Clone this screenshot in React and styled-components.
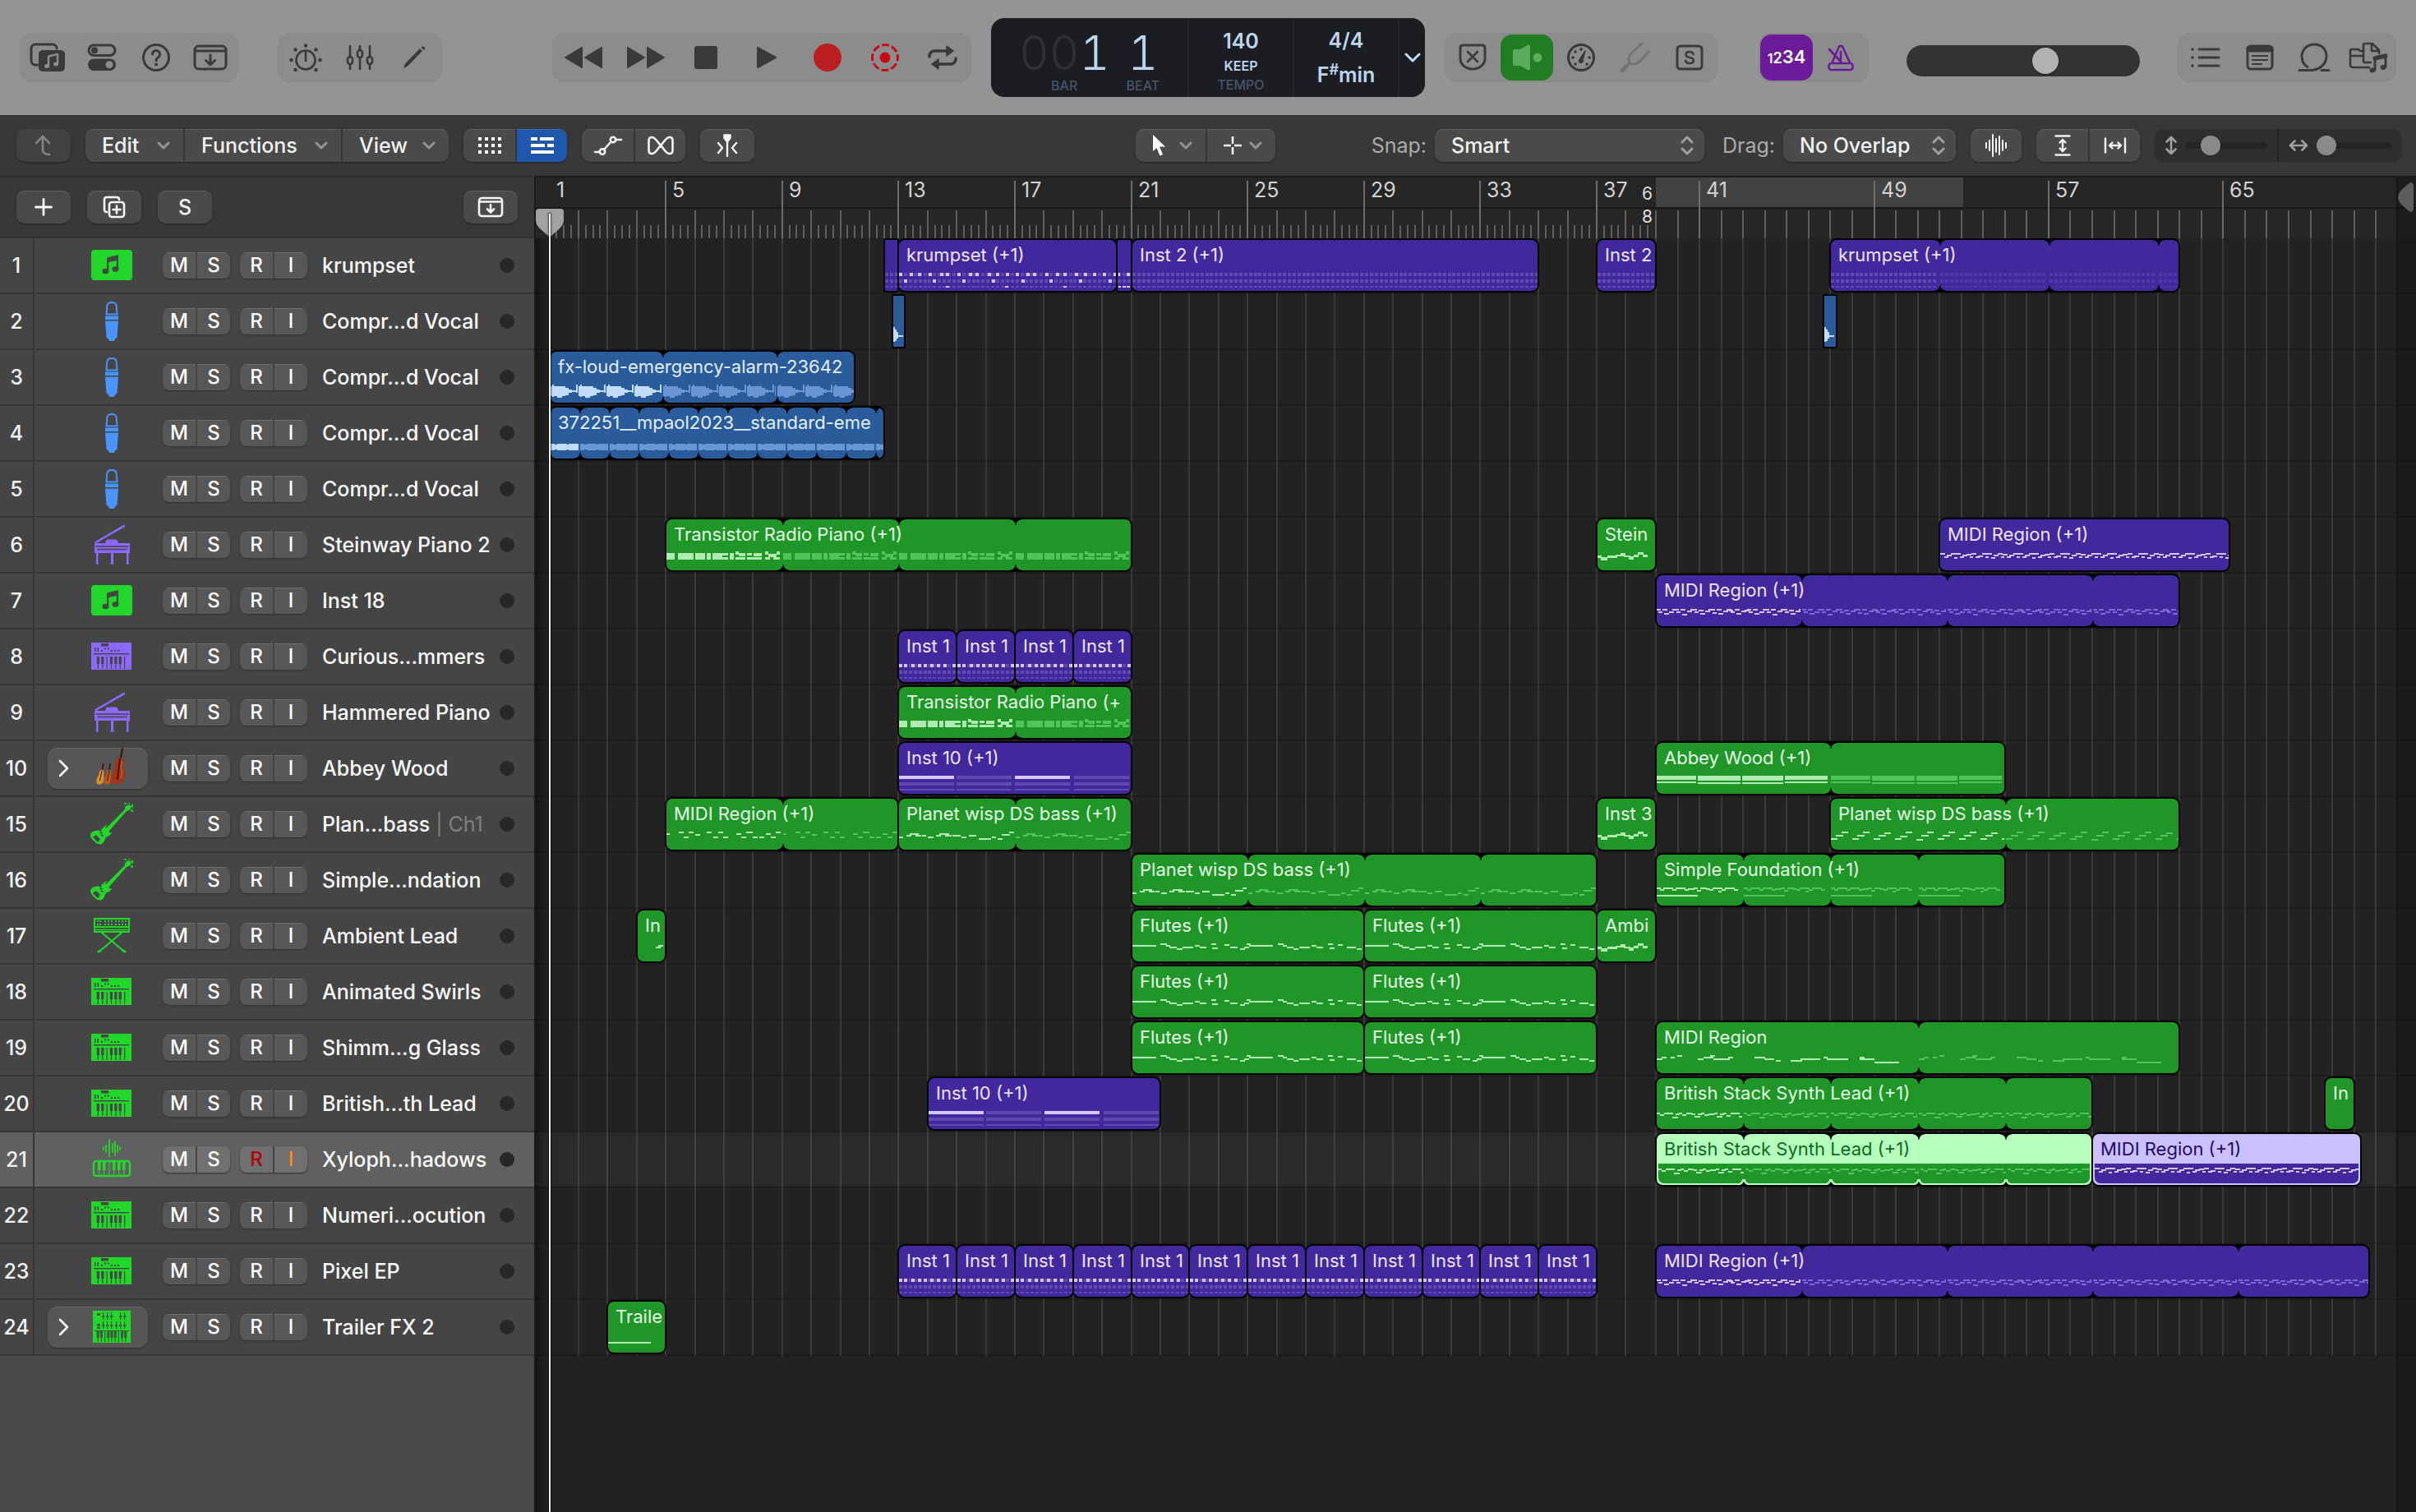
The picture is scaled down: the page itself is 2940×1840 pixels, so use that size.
import React from "react";
import styled, { createGlobalStyle, css } from "styled-components";

/* ------------------------------------------------------------------ */
/* Base                                                                */
/* ------------------------------------------------------------------ */

const GlobalStyle = createGlobalStyle`
  *, *::before, *::after { box-sizing: border-box; }
  html, body, #root { height: 100%; }
  body {
    margin: 0;
    background: #222222;
    color: #f2f2f2;
    font-family: Inter, "Liberation Sans", sans-serif;
    font-size: 25px;
    overflow: hidden;
  }
  button, select, input { font: inherit; color: inherit; margin: 0; }
`;

const App_ = styled.div`
  display: flex;
  flex-direction: column;
  height: 100vh;
`;

/* ------------------------------------------------------------------ */
/* Control bar                                                         */
/* ------------------------------------------------------------------ */

const ControlBar = styled.header`
  display: flex;
  align-items: center;
  flex: none;
  height: 140px;
  padding: 0 24px;
  background: #949494;
`;

const Cluster = styled.div`
  display: flex;
  align-items: center;
  gap: ${(p) => p.$gap}px;
  margin-left: ${(p) => p.$before || "0"};
`;

const Group = styled.div`
  display: flex;
  align-items: center;
  gap: ${(p) => (p.$tight ? 0 : 2)}px;
  padding: ${(p) => (p.$tight ? "0" : "2px")};
  height: 60px;
  border-radius: 16px;
  background: #8c8c8c;
  box-shadow: inset 0 0 0 1px #898989;
`;

const BarButton = styled.button`
  display: flex;
  align-items: center;
  justify-content: center;
  width: ${(p) => p.$w || 64}px;
  height: 56px;
  padding: 0;
  border: 0;
  border-radius: 14px;
  background: ${(p) => p.$bg || "transparent"};
  color: ${(p) => p.$color || "#3a3a3a"};
`;

const CountIn = styled.span`
  display: flex;
  align-items: baseline;
  color: #ffffff;
  font-weight: 600;
  font-size: 18px;
  line-height: 28px;
  b { font-weight: 600; font-size: 22px; }
  small { font-size: 16px; }
`;

const Lcd = styled.section`
  display: flex;
  height: 96px;
  border-radius: 16px;
  background: #1c1d22;
  color: #bdd6ee;
`;

const LcdPosition = styled.div`
  display: grid;
  grid-template-columns: auto auto;
  grid-template-rows: 60px 18px;
  column-gap: 20px;
  justify-content: center;
  align-content: center;
  width: 239px;
  padding-top: 8px;
`;

const BigDigits = styled.div`
  font-size: 57px;
  font-weight: 300;
  font-variant-numeric: tabular-nums;
  line-height: 60px;
  text-align: center;
  span { color: #2e2f38; }
`;

const LcdCaption = styled.div`
  color: #46546a;
  font-size: 16px;
  font-weight: 500;
  line-height: 18px;
  text-align: center;
`;

const LcdCell = styled.div`
  display: flex;
  flex-direction: column;
  align-items: center;
  justify-content: center;
  gap: ${(p) => (p.$pair ? 10 : 2)}px;
  width: 128px;
  padding: ${(p) => (p.$pair ? "0" : "8px 0 2px")};
  border-left: 2px solid #25262c;
`;

const LcdValue = styled.div`
  font-size: ${(p) => (p.$small ? 16 : 25)}px;
  font-weight: 600;
  line-height: ${(p) => (p.$small ? 24 : 32)}px;
  sup { font-size: 18px; line-height: 0; }
`;

const LcdMenu = styled.button`
  display: flex;
  align-items: center;
  justify-content: center;
  width: 33px;
  padding: 0;
  border: 0;
  border-left: 2px solid #25262c;
  background: transparent;
`;

const range = css`
  appearance: none;
  display: block;
  background: transparent;
`;

const MasterVolume = styled.input`
  ${range}
  width: 284px;
  height: 38px;
  border-radius: 19px;
  background: #333333;
  padding: 0 3px;
  &::-webkit-slider-thumb {
    appearance: none;
    width: 32px;
    height: 32px;
    border-radius: 50%;
    background: #b1b1b1;
    box-shadow: 0 1px 2px #1c1c1c;
  }
`;

const VolumeSlot = styled.div`
  padding-top: 8px;
`;

/* ------------------------------------------------------------------ */
/* Tracks-area menu bar                                                */
/* ------------------------------------------------------------------ */

const MenuBar = styled.nav`
  display: flex;
  align-items: center;
  flex: none;
  gap: 18px;
  height: 74px;
  padding: 0 18px 0 20px;
  background: #383838;
`;

const raised = css`
  background: #4a4a4a;
  box-shadow: inset 0 1px 0 #5e5e5e, 0 1px 2px #242424;
`;

const Segmented = styled.div`
  display: flex;
  height: 40px;
  border-radius: 10px;
  overflow: hidden;
  margin-left: ${(p) => p.$before || "0"};
  ${raised}
`;

const SegButton = styled.button`
  display: flex;
  align-items: center;
  justify-content: ${(p) => (p.$menu ? "space-between" : "center")};
  width: ${(p) => p.$w || 63}px;
  padding: ${(p) => (p.$menu ? "0 16px 0 20px" : "0")};
  border: 0;
  background: ${(p) => (p.$on ? "#1f57ad" : "transparent")};
  box-shadow: inset 0 1px 0 ${(p) => (p.$on ? "#3a6fbf" : "#5e5e5e")};
  font-weight: 500;
  white-space: nowrap;
  & + & { border-left: 2px solid ${(p) => (p.$on ? "#1f57ad" : "#363636")}; }
`;

const ToolButton = styled.button`
  display: flex;
  align-items: center;
  justify-content: center;
  width: ${(p) => p.$w || 66}px;
  height: 40px;
  padding: 0;
  border: 0;
  border-radius: 10px;
  font-weight: 500;
  background: ${(p) => (p.$off ? "#414141" : "#4a4a4a")};
  color: ${(p) => (p.$off ? "#858585" : "#f5f5f5")};
  box-shadow: inset 0 1px 0 ${(p) => (p.$off ? "#444444" : "#606060")}, 0 1px 2px #242424;
  margin-left: ${(p) => p.$before || "0"};
`;

const Field = styled.div`
  display: flex;
  align-items: center;
  gap: 10px;
  margin-left: ${(p) => p.$before || "0"};
  label { color: #ababab; min-width: 68px; text-align: right; }
`;

const SelectBox = styled.div`
  position: relative;
  width: ${(p) => p.$w}px;
  select {
    appearance: none;
    width: 100%;
    height: 40px;
    padding: 0 40px 0 20px;
    border: 0;
    border-radius: 10px;
    font-weight: 500;
    ${raised}
  }
  svg { position: absolute; right: 12px; top: 8px; pointer-events: none; }
`;

const ZoomPanel = styled.div`
  display: flex;
  height: 40px;
  width: 300px;
  border-radius: 10px;
  background: #2e2e2e;
  color: #a0a0a0;
`;

const ZoomCell = styled.div`
  display: flex;
  flex: 1;
  align-items: center;
  gap: 10px;
  min-width: 0;
  padding: 0 12px;
  & + & { border-left: 2px solid #222222; }
  svg { flex: none; }
`;

const ZoomRange = styled.input`
  ${range}
  flex: 1;
  width: 0;
  min-width: 0;
  height: 24px;
  &::-webkit-slider-runnable-track {
    height: 8px;
    border-radius: 4px;
    background: #242424;
  }
  &::-webkit-slider-thumb {
    appearance: none;
    width: 24px;
    height: 24px;
    margin-top: -8px;
    border-radius: 50%;
    background: #8a8a8a;
  }
`;

/* ------------------------------------------------------------------ */
/* Track headers                                                       */
/* ------------------------------------------------------------------ */

const Workspace = styled.main`
  display: grid;
  grid-template-columns: 652px minmax(0, 1fr);
  flex: 1;
  min-height: 0;
`;

const HeaderPanel = styled.section`
  display: flex;
  flex-direction: column;
  background: #484848;
  border-right: 2px solid #1a1a1a;
`;

const HeaderTools = styled.div`
  display: flex;
  align-items: center;
  gap: 20px;
  flex: none;
  height: 76px;
  padding: 0 20px;
  background: #383838;
  border-top: 2px solid #2f2f2f;
  border-bottom: 2px solid #323232;
`;

const TrackList = styled.ol`
  margin: 0;
  padding: 0;
  list-style: none;
`;

const TrackRow = styled.li`
  display: flex;
  align-items: stretch;
  height: 68px;
  border-bottom: 2px solid #363636;
  background: ${(p) => (p.$selected ? "#606060" : "#454545")};
`;

const TrackNumber = styled.div`
  display: flex;
  align-items: center;
  justify-content: center;
  width: 42px;
  border-right: 2px solid #363636;
  font-weight: 500;
`;

const TrackBody = styled.div`
  display: flex;
  flex: 1;
  align-items: center;
  min-width: 0;
  padding: 0 24px 0 16px;
`;

const IconSlot = styled.div`
  display: flex;
  align-items: center;
  width: 122px;
  height: 50px;
  padding-left: 52px;
  margin-right: 18px;
`;

const StackSlot = styled.button`
  display: flex;
  align-items: center;
  gap: 26px;
  width: 122px;
  height: 50px;
  padding: 0 0 0 12px;
  margin-right: 18px;
  border: 0;
  border-radius: 12px;
  background: #565656;
  box-shadow: inset 0 1px 0 #6a6a6a, 0 1px 2px #303030;
`;

const Pair = styled.div`
  display: flex;
  width: 82px;
  height: 32px;
  margin-right: ${(p) => p.$after}px;
  border-radius: 8px;
  overflow: hidden;
  background: ${(p) => (p.$lit ? "#707070" : "#575757")};
  box-shadow: 0 1px 2px #303030;
`;

const PairButton = styled.button`
  flex: 1;
  padding: 0;
  border: 0;
  background: transparent;
  box-shadow: inset 0 1px 0 #6e6e6e;
  color: ${(p) => p.$color || "#ffffff"};
  font-size: 24px;
  font-weight: 500;
  line-height: 32px;
  & + & { border-left: 2px solid #444444; }
`;

const TrackName = styled.div`
  flex: 1;
  min-width: 0;
  color: #fafafa;
  font-weight: 500;
  white-space: nowrap;
  span { color: #808080; font-weight: 400; }
`;

const TrackDot = styled.span`
  width: 18px;
  height: 18px;
  border-radius: 50%;
  background: #272727;
`;

/* ------------------------------------------------------------------ */
/* Timeline                                                            */
/* ------------------------------------------------------------------ */

const Timeline = styled.section`
  position: relative;
  display: flex;
  flex-direction: column;
  overflow: hidden;
  background: #222222;
`;

const Ruler = styled.div`
  position: relative;
  flex: none;
  height: 76px;
  background: #262626;
  border-top: 2px solid #1b1b1b;
  svg { display: block; }
`;

const Cycle = styled.div`
  position: absolute;
  top: 0;
  height: 36px;
  background: #424242;
`;

const RulerSplit = styled.div`
  position: absolute;
  top: 36px;
  left: 0;
  right: 0;
  height: 2px;
  background: #181818;
`;

const RulerLabel = styled.span`
  position: absolute;
  top: 0;
  padding-left: 8px;
  color: #d2d2d2;
  line-height: 30px;
`;

const MeterMark = styled.span`
  position: absolute;
  top: 6px;
  color: #dedede;
  font-size: 21px;
  line-height: 28px;
  text-align: right;
  transform: translateX(-100%);
  padding-right: 4px;
`;

const RulerTicks = styled.svg`
  position: absolute;
  inset: 0;
  width: 100%;
  height: 100%;
`;

const Lanes = styled.div`
  position: relative;
  flex: none;
`;

const GridLines = styled.svg`
  position: absolute;
  inset: 0;
  width: 100%;
  height: 100%;
`;

const Lane = styled.div`
  height: 68px;
  border-bottom: 2px solid #1c1c1c;
  background: ${(p) => (p.$selected ? "#2a2a2a" : "transparent")};
`;

const RegionLayer = styled.div`
  position: absolute;
  inset: 0;
`;

const RegionRow = styled.div`
  position: relative;
  height: 68px;
`;

const Beyond = styled.div`
  position: absolute;
  top: 2px;
  bottom: 0;
  right: 0;
  background: rgba(0, 0, 0, 0.22);
  border-left: 2px solid #151515;
`;

const EndMarker = styled.svg`
  position: absolute;
  top: 4px;
  left: 0;
`;

const EdgeShade = styled.div`
  position: absolute;
  top: 76px;
  bottom: 0;
  left: 0;
  width: 14px;
  background: linear-gradient(90deg, rgba(0, 0, 0, 0.4), rgba(0, 0, 0, 0));
`;

const Playhead = styled.div`
  position: absolute;
  top: 40px;
  bottom: 0;
  width: 34px;
  transform: translateX(-50%);
  svg { display: block; }
  &::after {
    content: "";
    position: absolute;
    top: 6px;
    bottom: 0;
    left: 16px;
    width: 2px;
    background: #f4f4f4;
    box-shadow: 0 0 2px 1px rgba(0, 0, 0, 0.6);
  }
`;

const PALETTE = {
  green: { bg: "#1f9627", text: "#e3fbe4", lite: "#aeecb2", dim: "#50c55a", base: "#50c55a", faint: "#36ab40", sel: "#b4ffbc", selText: "#0d6a1c" },
  purple: { bg: "#41289c", text: "#ebe5ff", lite: "#d2c6fb", dim: "#8267da", base: "#6149b0", faint: "#4f37a7", sel: "#ccc0ff", selText: "#1f0c66" },
  blue: { bg: "#2a5b9b", text: "#e2efff", lite: "#c3dcfb", dim: "#6a97d4", base: "#6a97d4", faint: "#6a97d4", sel: "#c3dcfb", selText: "#12345f" },
};

const Region = styled.article`
  position: absolute;
  top: 0;
  height: 66px;
  display: flex;
  flex-direction: column;
  overflow: hidden;
  border: 2px solid #000000;
  border-radius: ${(p) => (p.$square ? 3 : 9)}px;
  background: ${(p) => (p.$sel ? PALETTE[p.$c].sel : PALETTE[p.$c].bg)};
  color: ${(p) => (p.$sel ? PALETTE[p.$c].selText : PALETTE[p.$c].text)};
`;

const RegionName = styled.div`
  flex: none;
  height: 36px;
  padding-left: 9px;
  font-size: 22px;
  font-weight: 400;
  line-height: 36px;
  white-space: nowrap;
`;

const RegionNotes = styled.div`
  flex: 1;
  min-height: 0;
  overflow: hidden;
  ${(p) =>
    p.$sel &&
    css`
      margin: 0 2px 2px;
      border-radius: 0 0 7px 7px;
      background: ${PALETTE[p.$c].bg};
    `}
  svg { display: block; width: 100%; }
`;

const Notch = styled.i`
  position: absolute;
  width: 14px;
  height: 7px;
  transform: translateX(-50%);
  ${(p) =>
    p.$bottom
      ? css`
          bottom: 0;
          background:
            radial-gradient(circle at 0 0, transparent ${p.$ring ? 5 : 6}px, ${p.$ring || "#000"} ${p.$ring ? 5 : 7}px, ${p.$ring || "#000"} 7px, #000 8px) left / 7px 7px no-repeat,
            radial-gradient(circle at 100% 0, transparent ${p.$ring ? 5 : 6}px, ${p.$ring || "#000"} ${p.$ring ? 5 : 7}px, ${p.$ring || "#000"} 7px, #000 8px) right / 7px 7px no-repeat;
        `
      : css`
          top: 0;
          background:
            radial-gradient(circle at 0 100%, transparent 6px, #000 7px) left / 7px 7px no-repeat,
            radial-gradient(circle at 100% 100%, transparent 6px, #000 7px) right / 7px 7px no-repeat;
        `}
`;

/* ------------------------------------------------------------------ */
/* Time scale                                                          */
/* ------------------------------------------------------------------ */

const ORIGIN = 17;
const METER_CHANGE = 39;
const METER_X = 1363;
const barX = (bar) =>
  bar < METER_CHANGE
    ? Math.floor(ORIGIN + (bar - 1) * 35.4 + 0.01)
    : Math.round(METER_X + (bar - METER_CHANGE) * 26.55);

/* ------------------------------------------------------------------ */
/* Note patterns: [x, y, width, height]                                */
/* ------------------------------------------------------------------ */

const cells = (len) => {
  const out = [];
  for (let i = 0; i * 5.9 < len - 2; i++) {
    const x = Math.round(i * 5.9);
    out.push([x, 4, 4, 4], [x, 12, 4, 4], [x, 20, 4, 2]);
  }
  return out;
};

const zigzag = (unit, period) => (len) => {
  const out = [];
  for (let k = 0; k * period < len; k++) {
    const o = Math.round(k * period);
    unit.forEach(([x, y, w], i) => {
      out.push([o + x, y + ((k + i) % 5 === 4 ? 1 : 0), w, 2]);
    });
  }
  return { lite: out };
};

const fixed = (list, h = 2) => () => ({ lite: list.map(([x, y, w, hh]) => [x, y, w, hh || h]) });

const wave = (blob, period, mid) => (len) => {
  const out = [];
  for (let o = 0; o < len; o += period) {
    blob.forEach(([x, w, up, down]) => out.push([Math.round(o) + x, mid - up, w, up + down]));
  }
  return { lite: out };
};

const PATTERNS = {
  none: () => ({}),
  cells: (len) => ({ base: cells(len) }),
  krump: (len) => ({
    base: cells(len),
    lite: [
      ...[0, 13, 23, 36, 50, 57, 71, 85, 93, 108, 118, 130, 142, 155, 163, 178, 191, 200, 214, 225, 236, 248, 261].map((x) => [x, 4, 4, 4]),
      ...[6, 41, 77, 113, 149, 183, 219, 255].map((x) => [x, 12, 4, 4]),
      ...[57, 129, 200].map((x) => [x, 20, 4, 2]),
    ],
  }),
  krumpTail: (len) => ({ base: cells(len), lite: [[1, 4, 2, 4], [11, 4, 4, 4], [1, 20, 3, 2], [6, 20, 4, 2], [11, 20, 4, 2]] }),
  inst1: (len) => ({
    base: cells(len),
    lite: [0, 6, 15, 23, 30, 38, 46, 54, 65].map((x) => [x, 4, 4, 4]),
  }),
  inst10: () => ({
    base: [0, 70, 141, 213].flatMap((x) => [[x, 4, 67, 4], [x, 12, 67, 4], [x, 20, 67, 2]]),
    lite: [[0, 4, 67, 4], [141, 4, 67, 4]],
  }),
  radio: fixed([
    [0, 5, 10, 8], [14, 5, 19, 8], [35, 5, 12, 8], [49, 5, 5, 8], [56, 5, 12, 8], [68, 5, 7, 3], [68, 10, 7, 3],
    [77, 5, 5, 8], [84, 3, 4, 4], [84, 10, 12, 3], [88, 5, 8, 4], [98, 5, 6, 3], [98, 10, 18, 3], [106, 5, 10, 4],
    [120, 3, 4, 4], [124, 6, 10, 4], [120, 10, 6, 3], [134, 3, 4, 4], [130, 10, 8, 3],
  ]),
  bass: fixed([
    [0, 10, 5], [9, 8, 6], [13, 6, 11], [20, 8, 7], [28, 8, 5], [35, 10, 7], [45, 8, 6], [49, 6, 12], [56, 8, 8], [65, 8, 10],
    [76, 10, 6], [85, 8, 9], [97, 12, 15], [113, 10, 5], [120, 12, 6], [125, 7, 10], [134, 4, 6],
  ]),
  flutes: fixed([
    [0, 6, 29], [34, 4, 8], [41, 6, 5], [45, 8, 9], [54, 10, 7], [61, 8, 13], [76, 6, 6], [82, 8, 8], [96, 4, 6], [97, 9, 7],
    [112, 5, 6], [119, 8, 9], [131, 10, 6], [136, 8, 6], [139, 4, 5], [142, 6, 29], [177, 4, 7], [183, 6, 5], [188, 8, 8],
    [196, 10, 6], [203, 8, 13], [218, 6, 6], [224, 8, 8], [238, 4, 6], [240, 9, 6], [250, 5, 6], [261, 8, 11], [273, 10, 6],
  ]),
  sparse: fixed([
    [0, 6, 4], [15, 4, 6], [21, 10, 6], [27, 4, 6], [35, 7, 6], [49, 4, 6], [57, 10, 6], [63, 4, 6], [69, 10, 6], [85, 6, 6],
    [91, 10, 6], [97, 4, 8], [105, 10, 6], [113, 10, 6], [121, 6, 6], [127, 10, 6], [133, 4, 6],
  ]),
  abbey: fixed([
    [0, 4, 48, 5], [0, 11, 48, 2], [50, 4, 52, 6], [50, 12, 52, 2], [104, 4, 50, 6], [104, 12, 50, 2], [156, 4, 52, 5], [156, 11, 52, 2],
  ]),
  wobble: fixed([
    [0, 8, 5, 3], [4, 10, 8, 4], [12, 8, 12, 3], [22, 7, 8, 2], [28, 5, 6, 4], [32, 8, 8, 2], [38, 9, 6, 4], [44, 7, 6, 3], [49, 4, 7, 3], [55, 7, 6, 3],
  ]),
  steps: zigzag([[0, 12, 8], [6, 8, 9], [13, 4, 8]], 26),
  simple: (len) => ({
    lite: [
      ...zigzag([[0, 4, 5], [4, 6, 5], [8, 4, 8]], 15)(len).lite.filter(([x, , w]) => x + w < 102),
      [75, 8, 4, 2],
      [0, 13, 50, 2],
    ],
  }),
  ballad: fixed([
    [0, 8, 7], [6, 6, 6], [17, 6, 5], [25, 4, 6], [50, 8, 7], [57, 6, 12], [65, 4, 6], [69, 8, 20], [87, 6, 6], [119, 6, 13],
    [131, 8, 12], [145, 10, 6], [163, 10, 14], [175, 8, 24], [203, 6, 5], [207, 8, 26], [247, 6, 6], [247, 8, 18], [265, 12, 30],
  ]),
  british: zigzag([[0, 6, 4], [4, 8, 5], [9, 6, 7], [16, 6, 4], [19, 10, 7], [23, 7, 5]], 27),
  busy: zigzag([[0, 5, 5], [2, 8, 5], [7, 5, 6], [9, 10, 6], [15, 7, 6], [19, 5, 6]], 22),
  rush: zigzag([[0, 5, 6], [5, 9, 5], [8, 7, 6], [13, 5, 6], [17, 9, 4]], 19),
  hint: fixed([[25, 6, 6], [22, 8, 6]]),
  line: fixed([[0, 13, 52]]),
  alarm: wave([[0, 18, 6, 6], [2, 2, 8, 7], [8, 6, 6, 8], [18, 4, 4, 5], [22, 4, 2, 2], [26, 6, 1, 1], [31, 2, 8, 2]], 34, 12),
  hum: wave([[0, 36, 3, 3], [0, 5, 4, 4], [8, 12, 4, 4], [22, 12, 4, 4]], 36, 12),
  hit: fixed([[0, 2, 2, 18], [2, 5, 2, 14], [4, 8, 2, 8], [6, 12, 6, 2]]),
};

const toPath = (rects, offset, len) =>
  rects
    .filter(([x]) => x < len)
    .map(([x, y, w, h]) => `M${offset + x} ${y}h${Math.min(w, len - x)}v${h}H${offset + x}z`)
    .join("");

/* ------------------------------------------------------------------ */
/* Drawings                                                            */
/* ------------------------------------------------------------------ */

const Svg = ({ w, h, children, ...rest }) => (
  <svg width={w} height={h} viewBox={`0 0 ${w} ${h}`} fill="none" stroke="currentColor" strokeWidth="3" strokeLinecap="round" strokeLinejoin="round" aria-hidden="true" {...rest}>
    {children}
  </svg>
);

const Chevron = () => (
  <Svg w={16} h={10} stroke="#949494"><path d="M2 2l6 6 6-6" /></Svg>
);

const UpDown = () => (
  <Svg w={18} h={24} stroke="#a0a0a0"><path d="M3 8l6-6 6 6M3 16l6 6 6-6" /></Svg>
);

const I = {
  library: (
    <Svg w={44} h={36}>
      <path d="M10 27H7a5 5 0 0 1-5-5V7a5 5 0 0 1 5-5h21a5 5 0 0 1 5 5" />
      <rect x="11" y="9" width="32" height="26" rx="5" fill="currentColor" stroke="none" />
      <g stroke="#8c8c8c" strokeWidth="2.500" transform="translate(23 14)"><path d="M0 14.500V2.500L11 0v11.500" /><ellipse cx="-2" cy="14.500" rx="3" ry="2.500" fill="#8c8c8c" stroke="none" /><ellipse cx="9" cy="12" rx="3" ry="2.500" fill="#8c8c8c" stroke="none" /></g>
    </Svg>
  ),
  toggles: (
    <Svg w={36} h={34}>
      <rect x="2" y="2" width="32" height="12.500" rx="6.200" /><circle cx="9" cy="8.200" r="4" fill="currentColor" stroke="none" />
      <rect x="1" y="18.500" width="34" height="14.500" rx="7.200" fill="currentColor" stroke="none" /><circle cx="27" cy="25.700" r="4.500" fill="#8c8c8c" stroke="none" />
    </Svg>
  ),
  help: (
    <Svg w={36} h={36}><circle cx="18" cy="18" r="15.500" /><path d="M13.500 14a4.500 4.500 0 1 1 7 3.700c-1.800 1.200-2.500 1.900-2.500 4" /><circle cx="18" cy="26.500" r="1.200" fill="currentColor" strokeWidth="1.500" /></Svg>
  ),
  tray: (
    <Svg w={42} h={32}><rect x="2" y="2" width="38" height="28" rx="5" /><path d="M3 8h36M21 13v12M15.500 19.500l5.500 5.500 5.500-5.500" /></Svg>
  ),
  dial: (
    <Svg w={40} h={36} strokeWidth="2.600"><circle cx="20" cy="21" r="11.500" /><path d="M20 11v11" /><g fill="currentColor" stroke="none"><circle cx="20" cy="3.500" r="2.200" /><circle cx="7.500" cy="8.500" r="2.200" /><circle cx="32.500" cy="8.500" r="2.200" /><circle cx="2.500" cy="21" r="2.200" /><circle cx="37.500" cy="21" r="2.200" /><circle cx="7.500" cy="33" r="2.200" /><circle cx="32.500" cy="33" r="2.200" /></g></Svg>
  ),
  faders: (
    <Svg w={34} h={34} strokeWidth="2.600"><path d="M5 3v13M5 26v5M17 3v5M17 18v13M29 3v13M29 26v5" /><rect x="2" y="16" width="6" height="9" rx="3" /><rect x="14" y="8" width="6" height="9" rx="3" /><rect x="26" y="16" width="6" height="9" rx="3" /></Svg>
  ),
  pencil: (
    <Svg w={30} h={30} stroke="none"><path d="M4 22.500L22 4l3 3L7 25.500 2 28zM23.500 2.500l1.500-1a2.400 2.400 0 0 1 3 3l-1 1.500z" fill="currentColor" /></Svg>
  ),
  rewind: <Svg w={48} h={28}><path d="M22 2v24L2 14zM46 2v24L26 14z" fill="currentColor" strokeWidth="2" /></Svg>,
  forward: <Svg w={48} h={28}><path d="M2 2v24l20-12zM26 2v24l20-12z" fill="currentColor" strokeWidth="2" /></Svg>,
  stop: <Svg w={28} h={28}><rect x="0" y="0" width="28" height="28" rx="3" fill="currentColor" stroke="none" /></Svg>,
  play: <Svg w={26} h={28}><path d="M2 2v24l22-12z" fill="currentColor" strokeWidth="2" /></Svg>,
  record: <Svg w={34} h={34}><circle cx="17" cy="17" r="17" fill="#bb1e20" stroke="none" /></Svg>,
  capture: <Svg w={36} h={36} stroke="#c60c12"><circle cx="18" cy="18" r="15.500" strokeDasharray="9 3.170" strokeDashoffset="4.500" strokeLinecap="butt" /><circle cx="18" cy="18" r="6.500" fill="#c60c12" stroke="none" /></Svg>,
  cycle: <Svg w={38} h={32} strokeWidth="3.600"><path d="M3 15v-1a6 6 0 0 1 6-6h18M35 17v1a6 6 0 0 1-6 6H11" /><path d="M24 2l8 6-8 6zM14 18l-8 6 8 6z" fill="currentColor" strokeWidth="1.500" /></Svg>,
  replace: <Svg w={34} h={34}><path d="M5 2h24a3 3 0 0 1 3 3v13c0 7-6 13-15 13S2 25 2 18V5a3 3 0 0 1 3-3z" /><path d="M11 10l12 12M23 10L11 22" strokeWidth="2.600" /></Svg>,
  speaker: <Svg w={38} h={32} stroke="none" fill="#5cab5e"><path d="M2 8a2 2 0 0 1 2-2h7l10-5.500a1.500 1.500 0 0 1 2 1.500v28a1.500 1.500 0 0 1-2 1.500L11 26H4a2 2 0 0 1-2-2z" /><circle cx="32" cy="16" r="5.500" /></Svg>,
  gauge: <Svg w={36} h={36}><circle cx="18" cy="18" r="15.500" /><path d="M16.500 20L23 10l-3 11a2.300 2.300 0 1 1-3.500-1z" fill="currentColor" strokeWidth="1.500" /><g fill="currentColor" stroke="none"><circle cx="8" cy="18" r="1.800" /><circle cx="11" cy="11" r="1.800" /><circle cx="18" cy="8" r="1.800" /><circle cx="28" cy="18" r="1.800" /><circle cx="11" cy="26" r="1.800" /><circle cx="25" cy="26" r="1.800" /></g></Svg>,
  tuner: <Svg w={38} h={38} stroke="#737373"><path d="M3 35l9-9M27 2L14 14c-3 3-4 8-2 12 4 2 9 1 12-2l12-13" /><path d="M3 35l4-4" strokeWidth="5" /></Svg>,
  solo: <Svg w={34} h={32}><rect x="2" y="2" width="30" height="28" rx="4" /><path d="M21.500 12c-.6-2-2.200-3-4.500-3-2.600 0-4.400 1.300-4.400 3.400 0 4.800 9.200 2.200 9.200 7 0 2.200-2 3.600-4.800 3.600-2.600 0-4.400-1.200-4.900-3.300" strokeWidth="2.600" /></Svg>,
  metronome: <Svg w={34} h={34} stroke="#6b1a99" strokeWidth="2.600"><path d="M7 22L14.500 4.500a2.700 2.700 0 0 1 5 0L27.500 22" /><rect x="2.500" y="24" width="29" height="8" rx="3" /><path d="M17 19V10M3 7l15 16" /></Svg>,
  list: <Svg w={36} h={26}><path d="M10 3h24M10 13h24M10 23h24" /><path d="M2 3h.1M2 13h.1M2 23h.1" strokeWidth="3.600" /></Svg>,
  notepad: <Svg w={34} h={32}><rect x="2" y="2" width="30" height="28" rx="4" /><path d="M2 4h30v4H2z" fill="currentColor" /><path d="M8 14h18M8 19h18M8 24h11" strokeWidth="2.200" /></Svg>,
  loop: <Svg w={40} h={36}><path d="M2 33.500h13c11 0 20-7 20-17C35 8 29 2 20.500 2S5 8 5 16.500c0 6 3 10.500 7 13M29 33.500h9" /></Svg>,
  media: (
    <Svg w={48} h={38} strokeWidth="2.600">
      <path d="M18 11h-4l-2-2H4a2 2 0 0 0-2 2v17a3 3 0 0 0 3 3h20M2 17h16" /><path d="M27 25H20a2 2 0 0 1-2-2V4a2 2 0 0 1 2-2h9l8 8v4M28 2v9h9" />
      <path d="M32 34V19l13-3v14" strokeWidth="3" /><path d="M32 20l13-3" strokeWidth="5" /><ellipse cx="29" cy="34.500" rx="3.500" ry="3" fill="currentColor" stroke="none" /><ellipse cx="42" cy="31" rx="3.500" ry="3" fill="currentColor" stroke="none" />
    </Svg>
  ),
  up: <Svg w={24} h={26} strokeWidth="2.600"><path d="M3 10l8-8 8 8M11 3v15c0 4 2 6 8 6" /></Svg>,
  gridDots: (
    <Svg w={28} h={20} stroke="none" fill="#ffffff">
      {[0, 8, 16, 24].flatMap((x) => [0, 8, 16].map((y) => <rect key={`${x}-${y}`} x={x} y={y} width="4" height="4" />))}
    </Svg>
  ),
  rows: <Svg w={28} h={20} stroke="none" fill="#ffffff"><path d="M0 0h8v4H0zM11 0h17v4H11zM0 8h17v4H0zM20 8h8v4h-8zM0 16h28v4H0z" /></Svg>,
  automation: <Svg w={36} h={24} strokeWidth="2.600"><path d="M2 20h6M28 5h6M13 17L21 8" /><circle cx="11" cy="19.500" r="3.200" /><circle cx="24" cy="5" r="3.200" /></Svg>,
  flex: <Svg w={32} h={24} strokeWidth="2.600"><path d="M5 2C2 2 1.500 4 1.500 6v12c0 2 .5 4 3.500 4 5 0 6-5 11-10S22 2 27 2c3 0 3.500 2 3.500 4v12c0 2-.5 4-3.500 4-5 0-6-5-11-10S10 2 5 2z" /></Svg>,
  snapCursor: <Svg w={28} h={28} strokeWidth="2.400"><path d="M14 10v17M3 11l5 6-5 6M25 11l-5 6 5 6" /><path d="M10 1h8v4l-3 4h-2l-3-4z" fill="currentColor" strokeWidth="1.500" /></Svg>,
  pointer: <Svg w={18} h={28} stroke="none" fill="#ffffff"><path d="M1 1v20l4.500-4 4 9.500 3.500-1.500L9 15.500h7z" /></Svg>,
  marquee: <Svg w={22} h={22} strokeWidth="2.600" strokeLinecap="butt"><path d="M11 0v9M11 13v9M0 11h9M13 11h9" /></Svg>,
  waveform: <Svg w={28} h={30} strokeWidth="2"><path d="M2 12v6M6 9v12M10 2v26M14 7v16M18 4v22M22 9v12M26 12v6" /></Svg>,
  fitV: <Svg w={20} h={26} strokeWidth="2.400"><path d="M1.500 1.500h17M1.500 24.500h17M10 6v14M6.500 9.500L10 6l3.500 3.500M6.500 16.500L10 20l3.500-3.500" /></Svg>,
  fitH: <Svg w={28} h={20} strokeWidth="2.400"><path d="M2 1.500v17M26 1.500v17M7 10h14M10.500 6.500L7 10l3.500 3.500M17.500 6.500L21 10l-3.500 3.500" /></Svg>,
  arrowV: <Svg w={16} h={24} strokeWidth="2.600"><path d="M8 2v20M2.500 7.500L8 2l5.500 5.500M2.500 16.500L8 22l5.500-5.500" /></Svg>,
  arrowH: <Svg w={24} h={16} strokeWidth="2.600"><path d="M2 8h20M7.500 2.500L2 8l5.500 5.500M16.500 2.500L22 8l-5.500 5.500" /></Svg>,
  plus: <Svg w={22} h={22} strokeWidth="2.800"><path d="M11 1.500v19M1.500 11h19" /></Svg>,
  duplicate: <Svg w={28} h={28} strokeWidth="2.600"><path d="M5 20c-2 0-3-1-3-3V5c0-2 1-3 3-3h12c2 0 3 1 3 3" /><rect x="8" y="8" width="18" height="18" rx="3" /><path d="M17 12.500v9M12.500 17h9" /></Svg>,
  traySmall: <Svg w={32} h={26} strokeWidth="2.600"><rect x="2" y="2" width="28" height="22" rx="3.500" /><path d="M3 6.500h26M16 10v9M12 15.500l4 4 4-4" /></Svg>,
};

const Keys = ({ x, y, w, h, n, color }) => {
  const step = w / n;
  const out = [];
  for (let i = 1; i < n; i++) {
    out.push(<rect key={i} x={x + i * step - 0.6} y={y} width="1.200" height={h} fill={color} />);
    if (i % 7 !== 3 && i % 7 !== 0) out.push(<rect key={`b${i}`} x={x + i * step - 1.6} y={y} width="3.200" height={h * 0.6} fill={color} />);
  }
  return <g>{out}</g>;
};

const GREEN = "#22d62a";
const VIOLET = "#8c68ff";

const Synth = ({ color }) => (
  <Svg w={52} h={52} stroke="none">
    <rect x="1" y="9" width="49" height="33" fill={color} />
    <g fill="#454545">
      <rect x="13" y="10" width="9" height="3.500" /><path d="M5 15h1.500v5H5zM8.500 15H10v5H8.500zM13 18h2v2h-2zM17 15.500h2v2h-2zM21 15.500h2v2h-2zM25 18h2v2h-2zM29 18h2v2h-2zM33 18h2v2h-2z" />
      <rect x="4" y="22" width="43" height="1.400" />
    </g>
    <Keys x={4} y={26} w={43} h={15} n={8} color="#454545" />
  </Svg>
);

const TRACK_ICONS = {
  note: (
    <Svg w={52} h={52} stroke="none">
      <rect x="1" y="7" width="50" height="37" rx="4" fill={GREEN} />
      <g transform="translate(20 13)" fill="#3d4a3d">
        <path d="M0 3.500L14 0v17h-2.200V7L2.200 9.200V20H0z" /><ellipse cx="-1.500" cy="20" rx="4" ry="3.300" /><ellipse cx="10.500" cy="17.500" rx="4" ry="3.300" />
      </g>
    </Svg>
  ),
  mic: (
    <Svg w={52} h={52} stroke="none">
      <path d="M19.500 17.500l.8-9.500C20.600 4 22 3 26 3s5.400 1 5.700 5l.8 9.500z" stroke="#4a94ff" strokeWidth="2" />
      <path d="M18 19.500h16v4.500H18zM18 25.500h16l-1.500 20-3 2.500-.5 2h-6l-.5-2-3-2.500z" fill="#4a94ff" />
    </Svg>
  ),
  piano: (
    <Svg w={52} h={52} stroke="none" fill={VIOLET}>
      <path d="M5 22.500L41 1.500l1.500 2.300L7 24zM5 24h13c1-4 2-5 4-4.500h8c2-.5 3 .5 4 4.500h14v12H5zM7 36h2.500v12l1 1.500H6.500l.5-1.500zM44 36h2.500v12l.5 1.500h-4l1-1.500zM25 36h3v12l1.500 1.500h-6L25 48z" />
      <path d="M7 28h39M9 31.500h35" stroke="#454545" strokeWidth="1.500" />
    </Svg>
  ),
  synthV: <Synth color={VIOLET} />,
  synthG: <Synth color={GREEN} />,
  strings: (
    <Svg w={52} h={52} stroke="none">
      <path d="M38 1l2 .6-3 18-2.600-.4z" fill="#3b1409" />
      <path d="M33 14c4-2 8 0 7 4-1 3-1 4 0 7 2 4 2 9 1 13-1 5-5 7-9 7s-8-2-7-7c1-4 3-6 4-10 1-6 1-12 4-14z" fill="#a03413" />
      <path d="M36 15c-1 8-2 15-3 24" stroke="#2b0d05" strokeWidth="1.600" /><path d="M38 17c1 3 0 5-1 7 2 4 2 9 0 14" stroke="#d4572a" strokeWidth="1.600" />
      <path d="M15 20l1.600.4-1.600 9-1.600-.4z" fill="#3b1409" /><path d="M13 28c3-1 4 1 3.500 4-.5 2 0 4 0 7-.5 5-3 7-6.500 6.500S7 41 8 38c1-2 2-3 2.500-5 .5-3 .5-4 2.500-5z" fill="#d8932b" /><path d="M14 29l-2.500 12" stroke="#4b220a" strokeWidth="1.200" />
      <path d="M23.500 20l1.600.4-1.600 9-1.600-.4z" fill="#3b1409" /><path d="M22 28c2.500-1 3.500 1 3 4-.5 2 0 4 0 7-.5 5-2.500 7-5.500 6.500S16.500 41 17.500 38c1-2 1.500-3 2-5 .5-3 .5-4 2.500-5z" fill="#c0561d" /><path d="M23 29l-2.500 12" stroke="#4b220a" strokeWidth="1.200" />
    </Svg>
  ),
  guitar: (
    <Svg w={52} h={52} stroke="none">
      <path d="M21 27c-5 1-5 4-9 6-6 1-11 1-12 6 0 4 3 6 5 8 2 3 6 4 9 3 3-2 3-5 5-8 2-2 6-2 7-6-2 1-4 0-3-2l21-24c1 0 4-1 5-3l1-3-3-2-4 2c-1 2-1 4-2 5L19 31c-1 0-1-2 2-4z" fill={GREEN} />
      <path d="M47 0l2-1M51 3l1 2M43 1l-1-1M50 9l1 1" stroke={GREEN} strokeWidth="2.400" />
      <path d="M4 42l3-2 4 4-2 3zM12 36l2 1M13 39l2 1M11 33l2 1" stroke="#454545" strokeWidth="1.600" fill="#454545" />
    </Svg>
  ),
  stand: (
    <Svg w={52} h={52} stroke={GREEN} strokeWidth="2">
      <path d="M5 5h42v16H5zM5 15h42M14 22l26 22M38 22L12 44" />
      <path d="M7 18.500h38" strokeWidth="1.600" />
      <g fill={GREEN} stroke="none">{[8, 11, 17, 21, 25, 30, 34, 38, 42].map((x) => <path key={x} d={`M${x} 7h2v2h-2zM${x} 11h2v2h-2z`} />)}</g>
      <path d="M10 45l2-1M40 44l2 1" strokeWidth="3" />
    </Svg>
  ),
  sampler: (
    <Svg w={52} h={52} stroke={GREEN} strokeWidth="1.800">
      <path d="M16 11v3M19 9v8M23 2v20M27 7v10M30 4v17M33 9v8M36 11v3" />
      <rect x="4" y="28" width="44" height="18" rx="3" strokeWidth="2.400" />
      <g fill={GREEN} stroke="none">{[9, 15, 27, 33, 39].map((x) => <rect key={x} x={x} y="28" width="3.500" height="11" />)}</g>
      <path d="M10.700 39v7M16.700 39v7M23 28v18M28.700 39v7M34.700 39v7M40.700 39v7" strokeWidth="1.200" />
    </Svg>
  ),
  modular: (
    <Svg w={52} h={52} stroke="none">
      <rect x="3" y="6" width="46" height="39" fill={GREEN} />
      <g fill="#3a5a3c">
        <path d="M8 9h4v3H8zM8 22h4v3H8zM8 26h4v2H8z" />
        {[15, 20, 25, 36, 41].map((x) => <path key={x} d={`M${x} 8h1.200v9H${x}zM${x - 1} 12h3.200v2h-3.200z`} />)}
        {[15, 20, 25, 31, 36, 41].map((x) => <path key={x} d={`M${x} 19h1.200v9H${x}zM${x - 1} 23h3.200v2h-3.200z`} />)}
        <rect x="5" y="30" width="42" height="1" />
      </g>
      <Keys x={5} y={31} w={42} h={13} n={10} color="#3a5a3c" />
    </Svg>
  ),
};

/* ------------------------------------------------------------------ */
/* Song data: region = [start, end, name, color, pattern, loops, opts] */
/* ------------------------------------------------------------------ */

const flutes = [
  [21, 29, "Flutes (+1)", "green", "flutes"],
  [29, 37, "Flutes (+1)", "green", "flutes"],
];
const shortInst = (from, to) => {
  const out = [];
  for (let b = from; b < to; b += 2) out.push([b, b + 2, "Inst 1", "purple", "inst1"]);
  return out;
};
const humLoops = Array.from({ length: 11 }, (_, i) => 2.02 + i * 1.017);

const TRACKS = [
  { n: 1, name: "krumpset", icon: "note", regions: [
    [12.5, 13, "", "purple", "cells", [], { square: true }],
    [13, 20.5, "krumpset (+1)", "purple", "krump"],
    [20.5, 21, "", "purple", "krumpTail", [], { square: true }],
    [21, 35, "Inst 2 (+1)", "purple", "cells"],
    [37, 39, "Inst 2", "purple", "cells"],
    [47, 63, "krumpset (+1)", "purple", "cells", [52, 57, 62]],
  ] },
  { n: 2, name: "Compr...d Vocal", icon: "mic", regions: [
    [12.79, 13.22, "", "blue", "hit", [], { square: true }],
    [46.7, 47.3, "", "blue", "hit", [], { square: true }],
  ] },
  { n: 3, name: "Compr...d Vocal", icon: "mic", regions: [[1, 11.5, "fx-loud-emergency-alarm-23642", "blue", "alarm", [4.88, 8.8]]] },
  { n: 4, name: "Compr...d Vocal", icon: "mic", regions: [[1, 12.5, "372251__mpaol2023__standard-eme", "blue", "hum", humLoops]] },
  { n: 5, name: "Compr...d Vocal", icon: "mic", regions: [] },
  { n: 6, name: "Steinway Piano 2", icon: "piano", regions: [
    [5, 21, "Transistor Radio Piano (+1)", "green", "radio", [9, 13, 17]],
    [37, 39, "Stein", "green", "wobble"],
    [52, 65.3, "MIDI Region (+1)", "purple", "rush"],
  ] },
  { n: 7, name: "Inst 18", icon: "note", regions: [[39, 63, "MIDI Region (+1)", "purple", "busy", [45.66, 52.35, 59]]] },
  { n: 8, name: "Curious...mmers", icon: "synthV", regions: shortInst(13, 21) },
  { n: 9, name: "Hammered Piano", icon: "piano", regions: [[13, 21, "Transistor Radio Piano (+", "green", "radio", [17]]] },
  { n: 10, name: "Abbey Wood", icon: "strings", stack: true, regions: [
    [13, 21, "Inst 10 (+1)", "purple", "inst10"],
    [39, 55, "Abbey Wood (+1)", "green", "abbey", [47]],
  ] },
  { n: 15, name: "Plan...bass", channel: "Ch1", icon: "guitar", regions: [
    [5, 13, "MIDI Region (+1)", "green", "sparse", [9]],
    [13, 21, "Planet wisp DS bass (+1)", "green", "bass", [17]],
    [37, 39, "Inst 3", "green", "wobble"],
    [47, 63, "Planet wisp DS bass (+1)", "green", "steps", [55]],
  ] },
  { n: 16, name: "Simple...ndation", icon: "guitar", regions: [
    [21, 37, "Planet wisp DS bass (+1)", "green", "bass", [25, 29, 33]],
    [39, 55, "Simple Foundation (+1)", "green", "simple", [43, 47, 51]],
  ] },
  { n: 17, name: "Ambient Lead", icon: "stand", regions: [
    [4, 5, "In", "green", "hint"],
    ...flutes,
    [37, 39, "Ambi", "green", "wobble"],
  ] },
  { n: 18, name: "Animated Swirls", icon: "synthG", regions: flutes },
  { n: 19, name: "Shimm...g Glass", icon: "synthG", regions: [...flutes, [39, 63, "MIDI Region", "green", "ballad", [51]]] },
  { n: 20, name: "British...th Lead", icon: "synthG", regions: [
    [14, 22, "Inst 10 (+1)", "purple", "inst10"],
    [39, 59, "British Stack Synth Lead (+1)", "green", "british", [43, 47, 51, 55]],
    [69.67, 71, "In", "green", "none"],
  ] },
  { n: 21, name: "Xyloph...hadows", icon: "sampler", selected: true, regions: [
    [39, 59, "British Stack Synth Lead (+1)", "green", "british", [43, 47, 51, 55], { sel: true }],
    [59, 71.3, "MIDI Region (+1)", "purple", "rush", [], { sel: true }],
  ] },
  { n: 22, name: "Numeri...ocution", icon: "synthG", regions: [] },
  { n: 23, name: "Pixel EP", icon: "synthG", regions: [
    ...shortInst(13, 37),
    [39, 71.7, "MIDI Region (+1)", "purple", "busy", [45.66, 52.35, 59, 65.67]],
  ] },
  { n: 24, name: "Trailer FX 2", icon: "modular", stack: true, regions: [[3, 5, "Traile", "green", "line"]] },
];

const LAST_BAR = 72;
const BAR_LABELS = [1, 5, 9, 13, 17, 21, 25, 29, 33, 37, 41, 49, 57, 65];

/* ------------------------------------------------------------------ */
/* Composite parts                                                     */
/* ------------------------------------------------------------------ */

function RegionView({ data }) {
  const [start, end, name, color, pattern, loops = [], opts = {}] = data;
  const left = barX(start);
  const width = barX(end) - left + 2;
  const tones = PALETTE[color];
  const edges = [start, ...loops, end].map((b) => barX(b) - left);
  const paths = [];
  edges.slice(0, -1).forEach((offset, i) => {
    const len = edges[i + 1] - offset - 2;
    const { lite = [], base = [] } = PATTERNS[pattern](len);
    paths.push(<path key={`b${i}`} d={toPath(base, offset, len)} fill={i ? tones.faint : tones.base} />);
    paths.push(<path key={`l${i}`} d={toPath(lite, offset, len)} fill={i ? tones.dim : tones.lite} />);
  });
  return (
    <Region $c={color} $sel={opts.sel} $square={opts.square} style={{ left: left - 1, width }}>
      <RegionName>{name}</RegionName>
      <RegionNotes $c={color} $sel={opts.sel}>
        <svg height="26" shapeRendering="crispEdges" aria-hidden="true">{paths}</svg>
      </RegionNotes>
      {edges.slice(1, -1).map((x) => (
        <React.Fragment key={x}>
          <Notch style={{ left: x }} />
          <Notch $bottom $ring={opts.sel ? tones.sel : undefined} style={{ left: x }} />
        </React.Fragment>
      ))}
    </Region>
  );
}

function TrackHeader({ track }) {
  const icon = TRACK_ICONS[track.icon];
  return (
    <TrackRow $selected={track.selected}>
      <TrackNumber>{track.n}</TrackNumber>
      <TrackBody>
        {track.stack ? (
          <StackSlot type="button" aria-label={`Expand ${track.name}`}>
            <Svg w={14} h={22} stroke="#ffffff" strokeWidth="2.600"><path d="M3 2l9 9-9 9" /></Svg>
            {icon}
          </StackSlot>
        ) : (
          <IconSlot>{icon}</IconSlot>
        )}
        <Pair $after={12} $lit={track.selected}>
          <PairButton type="button">M</PairButton>
          <PairButton type="button">S</PairButton>
        </Pair>
        <Pair $after={18} $lit={track.selected}>
          <PairButton type="button" $color={track.selected ? "#b00509" : undefined}>R</PairButton>
          <PairButton type="button" $color={track.selected ? "#ff8c1a" : undefined}>I</PairButton>
        </Pair>
        <TrackName>
          {track.name}
          {track.channel && <span> | {track.channel}</span>}
        </TrackName>
        <TrackDot />
      </TrackBody>
    </TrackRow>
  );
}

function RulerView() {
  let d = "";
  let long = "";
  for (let b = 1; b <= LAST_BAR; b++) {
    const x = barX(b) - 1;
    if (BAR_LABELS.includes(b)) {
      if (b > 1) long += `M${x} 4h2v70h-2z`;
    } else d += `M${x} 40h2v34h-2z`;
    if (b < METER_CHANGE) {
      for (let q = 1; q < 4; q++) d += `M${barX(b + q / 4) - 1} 58h2v16h-2z`;
    }
  }
  return (
    <Ruler>
      <Cycle style={{ left: barX(39), width: barX(53) - barX(39) + 2 }} />
      <RulerSplit />
      <RulerTicks shapeRendering="crispEdges" aria-hidden="true">
        <path d={d} fill="#5e5e5e" />
        <path d={long} fill="#6e6e6e" />
      </RulerTicks>
      {BAR_LABELS.map((b) => (
        <RulerLabel key={b} style={{ left: barX(b) }}>{b}</RulerLabel>
      ))}
      <MeterMark style={{ left: barX(METER_CHANGE) }}>6<br />8</MeterMark>
    </Ruler>
  );
}

function LanesView() {
  let d = "";
  for (let b = 2; b <= LAST_BAR; b++) d += `M${barX(b) - 1} 0h2v${TRACKS.length * 68}h-2z`;
  return (
    <Lanes>
      {TRACKS.map((t) => (
        <Lane key={t.n} $selected={t.selected} />
      ))}
      <GridLines shapeRendering="crispEdges" aria-hidden="true"><path d={d} fill="#ffffff" fillOpacity="0.11" /></GridLines>
      <RegionLayer>
        {TRACKS.map((t) => (
          <RegionRow key={t.n}>
            {t.regions.map((r) => (
              <RegionView key={r[0]} data={r} />
            ))}
          </RegionRow>
        ))}
      </RegionLayer>
    </Lanes>
  );
}

/* ------------------------------------------------------------------ */
/* App                                                                 */
/* ------------------------------------------------------------------ */

export default function App() {
  return (
    <App_>
      <GlobalStyle />
      <ControlBar>
        <Cluster $gap={48}>
          <Group>
            <BarButton type="button" aria-label="Library">{I.library}</BarButton>
            <BarButton type="button" aria-label="Inspector">{I.toggles}</BarButton>
            <BarButton type="button" aria-label="Quick Help">{I.help}</BarButton>
            <BarButton type="button" aria-label="Toolbar">{I.tray}</BarButton>
          </Group>
          <Group>
            <BarButton type="button" aria-label="Smart Controls">{I.dial}</BarButton>
            <BarButton type="button" aria-label="Mixer">{I.faders}</BarButton>
            <BarButton type="button" aria-label="Editors">{I.pencil}</BarButton>
          </Group>
        </Cluster>
        <Cluster $gap={24} $before="auto">
          <Group $tight>
            <BarButton type="button" $w={76} aria-label="Rewind">{I.rewind}</BarButton>
            <BarButton type="button" $w={76} aria-label="Forward">{I.forward}</BarButton>
            <BarButton type="button" $w={70} aria-label="Stop">{I.stop}</BarButton>
            <BarButton type="button" $w={78} aria-label="Play">{I.play}</BarButton>
            <BarButton type="button" $w={70} aria-label="Record">{I.record}</BarButton>
            <BarButton type="button" $w={70} aria-label="Capture Recording">{I.capture}</BarButton>
            <BarButton type="button" $w={70} aria-label="Cycle">{I.cycle}</BarButton>
          </Group>
          <Lcd>
            <LcdPosition>
              <BigDigits><span>00</span>1</BigDigits>
              <BigDigits>1</BigDigits>
              <LcdCaption>BAR</LcdCaption>
              <LcdCaption>BEAT</LcdCaption>
            </LcdPosition>
            <LcdCell>
              <LcdValue>140</LcdValue>
              <LcdValue $small>KEEP</LcdValue>
              <LcdCaption>TEMPO</LcdCaption>
            </LcdCell>
            <LcdCell $pair>
              <LcdValue>4/4</LcdValue>
              <LcdValue>F<sup>#</sup>min</LcdValue>
            </LcdCell>
            <LcdMenu type="button" aria-label="Display mode"><Svg w={20} h={12} stroke="#c4dcf2"><path d="M2 2l8 8 8-8" /></Svg></LcdMenu>
          </Lcd>
          <Group>
            <BarButton type="button" aria-label="Replace">{I.replace}</BarButton>
            <BarButton type="button" $bg="#217d22" aria-label="Low Latency">{I.speaker}</BarButton>
            <BarButton type="button" aria-label="Varispeed">{I.gauge}</BarButton>
            <BarButton type="button" aria-label="Tuner">{I.tuner}</BarButton>
            <BarButton type="button" aria-label="Solo">{I.solo}</BarButton>
          </Group>
        </Cluster>
        <Cluster $gap={46} $before="50px">
          <Group>
            <BarButton type="button" $bg="#6b1a99" aria-label="Count In"><CountIn><small>1</small>2<b>34</b></CountIn></BarButton>
            <BarButton type="button" aria-label="Metronome">{I.metronome}</BarButton>
          </Group>
          <VolumeSlot>
            <MasterVolume type="range" min="0" max="100" defaultValue="61" aria-label="Master volume" />
          </VolumeSlot>
          <Group>
            <BarButton type="button" aria-label="List Editors">{I.list}</BarButton>
            <BarButton type="button" aria-label="Note Pads">{I.notepad}</BarButton>
            <BarButton type="button" aria-label="Loop Browser">{I.loop}</BarButton>
            <BarButton type="button" aria-label="Browsers">{I.media}</BarButton>
          </Group>
        </Cluster>
      </ControlBar>

      <MenuBar>
        <ToolButton type="button" $off aria-label="Up">{I.up}</ToolButton>
        <Segmented>
          <SegButton type="button" $menu $w={119}>Edit<Chevron /></SegButton>
          <SegButton type="button" $menu $w={192}>Functions<Chevron /></SegButton>
          <SegButton type="button" $menu $w={131}>View<Chevron /></SegButton>
        </Segmented>
        <Segmented>
          <SegButton type="button" aria-label="Live Loops">{I.gridDots}</SegButton>
          <SegButton type="button" $on aria-label="Tracks">{I.rows}</SegButton>
        </Segmented>
        <Segmented>
          <SegButton type="button" aria-label="Automation">{I.automation}</SegButton>
          <SegButton type="button" aria-label="Flex">{I.flex}</SegButton>
        </Segmented>
        <ToolButton type="button" aria-label="Catch Playhead">{I.snapCursor}</ToolButton>
        <Segmented $before="auto">
          <SegButton type="button" $menu $w={85} aria-label="Left-click tool">{I.pointer}<Chevron /></SegButton>
          <SegButton type="button" $menu $w={85} aria-label="Command-click tool">{I.marquee}<Chevron /></SegButton>
        </Segmented>
        <Field $before="98px">
          <label htmlFor="snap">Snap:</label>
          <SelectBox $w={328}>
            <select id="snap" defaultValue="Smart"><option>Smart</option></select>
            <UpDown />
          </SelectBox>
        </Field>
        <Field>
          <label htmlFor="drag">Drag:</label>
          <SelectBox $w={210}>
            <select id="drag" defaultValue="No Overlap"><option>No Overlap</option></select>
            <UpDown />
          </SelectBox>
        </Field>
        <ToolButton type="button" $w={62} aria-label="Waveform zoom">{I.waveform}</ToolButton>
        <Segmented>
          <SegButton type="button" aria-label="Fit vertically">{I.fitV}</SegButton>
          <SegButton type="button" aria-label="Fit horizontally">{I.fitH}</SegButton>
        </Segmented>
        <ZoomPanel>
          <ZoomCell>{I.arrowV}<ZoomRange type="range" min="0" max="100" defaultValue="24" aria-label="Vertical zoom" /></ZoomCell>
          <ZoomCell>{I.arrowH}<ZoomRange type="range" min="0" max="100" defaultValue="0" aria-label="Horizontal zoom" /></ZoomCell>
        </ZoomPanel>
      </MenuBar>

      <Workspace>
        <HeaderPanel>
          <HeaderTools>
            <ToolButton type="button" aria-label="New tracks">{I.plus}</ToolButton>
            <ToolButton type="button" aria-label="Duplicate track">{I.duplicate}</ToolButton>
            <ToolButton type="button">S</ToolButton>
            <ToolButton type="button" $before="auto" aria-label="Global tracks">{I.traySmall}</ToolButton>
          </HeaderTools>
          <TrackList>
            {TRACKS.map((t) => (
              <TrackHeader key={t.n} track={t} />
            ))}
          </TrackList>
        </HeaderPanel>

        <Timeline>
          <RulerView />
          <LanesView />
          <EdgeShade />
          <Beyond style={{ left: barX(73) - 2 }}>
            <EndMarker width="22" height="40" viewBox="0 0 22 40" aria-hidden="true"><path d="M15 2c3 0 4 2 4 5v26c0 3-1 5-4 5C10 34 0 27 0 20S10 6 15 2z" fill="#5c5c5c" /></EndMarker>
          </Beyond>
          <Playhead style={{ left: barX(1) }}>
            <svg width="34" height="36" viewBox="0 0 34 36" aria-hidden="true"><path d="M4 0h26a4 4 0 0 1 4 4v10c0 8-8 12-17 21C8 26 0 22 0 14V4a4 4 0 0 1 4-4z" fill="#a2a2a2" /></svg>
          </Playhead>
        </Timeline>
      </Workspace>
    </App_>
  );
}
